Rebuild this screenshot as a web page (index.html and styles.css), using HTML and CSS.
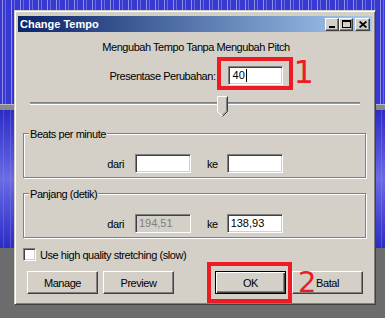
FILE: index.html
```html
<!DOCTYPE html>
<html>
<head>
<meta charset="utf-8">
<link rel="stylesheet" href="styles.css">
</head>
<body>
<div class="window">
  <div class="titlebar">
    <span class="title">Change Tempo</span>
    <div class="tbtns">
      <span class="tbtn"><svg width="8" height="7" viewBox="0 0 8 7"><rect x="1" y="5" width="6" height="2"/></svg></span>
      <span class="tbtn"><svg width="9" height="8" viewBox="0 0 9 8"><path d="M0 0h9v8H0z M1 2h7v5H1z" fill-rule="evenodd"/></svg></span>
      <span class="tbtn close"><svg width="8" height="7" viewBox="0 0 8 7"><path d="M0.6 0.5L7.4 6.5M7.4 0.5L0.6 6.5" stroke="#000" stroke-width="1.7" fill="none"/></svg></span>
    </div>
  </div>
  <div class="content">
    <div class="heading">Mengubah Tempo Tanpa Mengubah Pitch</div>
    <div class="pct">
      <span class="lbl">Presentase Perubahan:</span>
      <span class="anchor">
        <span class="field">40<i class="caret"></i></span>
        <span class="mark mark1"></span>
        <span class="num num1">1</span>
      </span>
    </div>
    <div class="slider">
      <div class="track"></div>
      <svg class="thumb" width="11" height="21" viewBox="0 0 11 21">
        <path d="M0.5 0.5H10.5V15.5L5.5 20.5L0.5 15.5Z" fill="#d4d0c8"/>
        <path d="M0.5 15.5V0.5H10" stroke="#fff" fill="none"/>
        <path d="M10.5 0.5V15.5L5.5 20.5" stroke="#404040" fill="none"/>
        <path d="M9.5 1.5V15L5.5 19" stroke="#808080" fill="none"/>
        <path d="M0.5 15.5L5 20" stroke="#fff" fill="none"/>
      </svg>
    </div>
    <div class="group g1">
      <span class="glabel">Beats per minute</span>
      <div class="grow">
        <span class="rl">dari</span>
        <span class="field f56"></span>
        <span class="rl ke">ke</span>
        <span class="field f56"></span>
      </div>
    </div>
    <div class="group g2">
      <span class="glabel">Panjang (detik)</span>
      <div class="grow">
        <span class="rl">dari</span>
        <span class="field f56 disabled">194,51</span>
        <span class="rl ke">ke</span>
        <span class="field f56">138,93</span>
      </div>
    </div>
    <div class="check">
      <span class="cbox"></span>
      <span>Use high quality stretching (slow)</span>
    </div>
    <div class="buttons">
      <span class="btn">Manage</span>
      <span class="btn">Preview</span>
      <span class="spacer"></span>
      <span class="anchor">
        <span class="btn default">OK</span>
        <span class="mark mark2"></span>
        <span class="num num2">2</span>
      </span>
      <span class="btn">Batal</span>
    </div>
  </div>
</div>
</body>
</html>
```
FILE: styles.css
```css
* { box-sizing: border-box; }
html, body { margin: 0; }
body {
  width: 385px;
  height: 318px;
  overflow: hidden;
  padding: 10px 0 0 14px;
  font-family: "Liberation Sans", Arial, sans-serif;
  font-size: 11px;
  letter-spacing: -0.45px;
  color: #000;
  background:
    linear-gradient(#b8b8c8, #b8b8c8) 0 104px / 100% 1px no-repeat,
    linear-gradient(#8a8a8a, #8a8a8a) 0 105px / 100% 5px no-repeat,
    repeating-linear-gradient(90deg, transparent 0 2px, rgba(205, 205, 240, .6) 2px 3px, transparent 3px 5px, rgba(170, 170, 235, .45) 5px 6px, transparent 6px 9px) 0 0 / 100% 104px no-repeat,
    repeating-linear-gradient(90deg, transparent 0 3px, rgba(140, 140, 235, .35) 3px 4px, transparent 4px 7px) 0 110px / 100% 138px no-repeat,
    linear-gradient(to bottom, #2c2cc4 0, #5656dc 35%, #6c6ce2 50%, #5656dc 65%, #2c2cc4 100%) 0 110px / 100% 138px no-repeat,
    linear-gradient(#3838d2, #3838d2) 0 0 / 100% 104px no-repeat,
    #6c6c6c;
}
.window {
  width: 362px;
  height: 295px;
  background: #d4d0c8;
  border: 1px solid;
  border-color: #d4d0c8 #404040 #404040 #d4d0c8;
  box-shadow: inset 1px 1px 0 #fff, inset -1px -1px 0 #808080;
  padding: 5px 3px 3px 3px;
  display: flex;
  flex-direction: column;
}
.titlebar {
  height: 16px;
  background: linear-gradient(to right, #0a246a, #a6caf0);
  display: flex;
  align-items: center;
  justify-content: space-between;
  padding: 0 2px 0 2px;
}
.title {
  color: #fff;
  font-weight: bold;
  font-size: 11px;
  letter-spacing: 0;
}
.tbtns { display: flex; align-items: center; }
.tbtn {
  width: 14px;
  height: 13px;
  background: #d4d0c8;
  border: 1px solid;
  border-color: #fff #404040 #404040 #fff;
  box-shadow: inset -1px -1px 0 #808080;
  display: flex;
  align-items: center;
  justify-content: center;
}
.tbtn svg { display: block; }
.tbtn.close { margin-left: 2px; width: 15px; }
.content {
  flex: 1;
  display: flex;
  flex-direction: column;
}
.heading {
  margin-top: 9px;
  line-height: 13px;
  text-align: center;
  padding-left: 2px;
}
.pct {
  margin-top: 12px;
  display: flex;
  align-items: center;
  justify-content: center;
  height: 19px;
  padding-left: 2px;
}
.lbl { margin-right: 12px; }
.anchor { position: relative; display: inline-flex; }
.field {
  height: 19px;
  width: 55px;
  background: #fff;
  border: 1px solid;
  border-color: #808080 #fff #fff #808080;
  box-shadow: inset 1px 1px 0 #404040, inset -1px -1px 0 #d4d0c8;
  padding: 0 3px;
  display: flex;
  align-items: center;
  line-height: 13px;
  letter-spacing: 0;
}
.pct .field { padding-left: 4px; }
.caret {
  display: inline-block;
  width: 1px;
  height: 13px;
  background: #000;
  margin-left: 1px;
}
.f56 { width: 56px; }
.field.disabled { background: #d4d0c8; color: #808080; }
.mark {
  position: absolute;
  border: 4px solid #ed1c24;
}
.mark1 { left: -11px; right: -10px; top: -9px; bottom: -5px; }
.num {
  position: absolute;
  color: #ed1c24;
  font-family: "DejaVu Sans", sans-serif;
  line-height: 1;
  letter-spacing: 0;
}
.num1 { left: 66px; top: -10px; font-size: 32px; }
.slider {
  margin-top: 11px;
  height: 21px;
  position: relative;
  display: flex;
  align-items: flex-start;
}
.track {
  margin: 6px 0 0 12px;
  width: 330px;
  height: 3px;
  border-top: 1px solid #808080;
  border-bottom: 1px solid #fff;
  background: #9a9a9a;
  background-clip: padding-box;
}
.thumb { position: absolute; left: 199px; top: 0; }
.group {
  margin: 16px 6px 0 5px;
  height: 45px;
  border: 1px solid #808080;
  box-shadow: inset 1px 1px 0 #fff, 1px 1px 0 #fff;
}
.g2 { margin-top: 15px; }
.glabel {
  display: inline-block;
  margin: -6px 0 0 5px;
  padding: 0 1px;
  line-height: 13px;
  background: #d4d0c8;
  vertical-align: top;
}
.grow {
  margin-top: 8px;
  display: flex;
  align-items: center;
  justify-content: center;
  padding-left: 1px;
}
.rl { margin-right: 11px; }
.rl.ke { margin-left: 16px; margin-right: 9px; }
.check {
  margin: 10px 0 0 5px;
  display: flex;
  align-items: center;
  height: 13px;
}
.cbox {
  width: 13px;
  height: 13px;
  background: #fff;
  border: 1px solid;
  border-color: #808080 #fff #fff #808080;
  box-shadow: inset 1px 1px 0 #404040, inset -1px -1px 0 #d4d0c8;
  margin-right: 4px;
}
.buttons {
  margin-top: 10px;
  display: flex;
  padding: 0 9px;
  gap: 5px;
}
.spacer { flex: 1; }
.btn {
  width: 71px;
  height: 23px;
  border: 1px solid;
  border-color: #fff #404040 #404040 #fff;
  box-shadow: inset -1px -1px 0 #808080;
  display: flex;
  align-items: center;
  justify-content: center;
}
.btn.default {
  border: 1px solid #000;
  box-shadow: inset 1px 1px 0 #fff, inset -1px -1px 0 #404040, inset -2px -2px 0 #808080;
}
.buttons .anchor { margin-right: 1px; }
.mark2 { left: -8px; right: -6px; top: -9px; bottom: -9px; }
.num2 { left: 83px; top: -3px; font-size: 29px; }
```
